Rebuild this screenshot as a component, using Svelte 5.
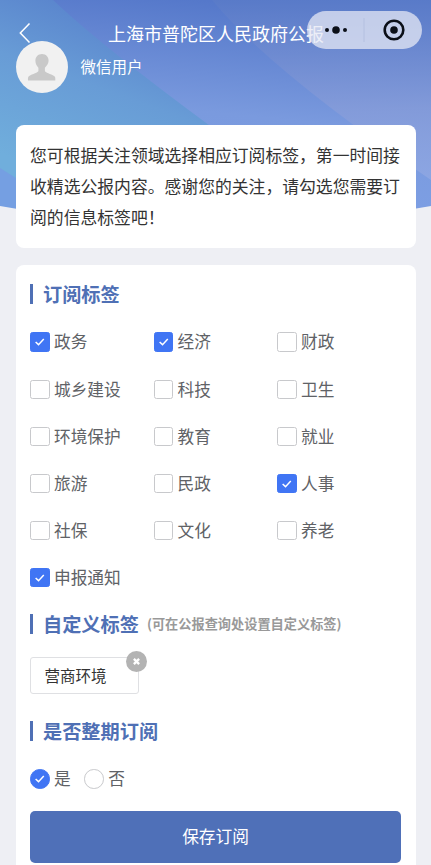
<script>
  const row = (names) => names.split(' ');
  const labels = row('政务 经济 财政 城乡建设 科技 卫生 环境保护 教育 就业 旅游 民政 人事 社保 文化 养老 申报通知');
  let chosen = $state(['政务', '经济', '人事', '申报通知']);
  let whole = $state('是');
  let tags = $state(['营商环境']);

  function toggle(name) {
    chosen = chosen.includes(name) ? chosen.filter((n) => n !== name) : [...chosen, name];
  }
</script>

{#snippet tick()}
  <svg class="tick" viewBox="0 0 20 20"><path d="M5.3 10.2 L8.6 13.3 L14.6 6.8" /></svg>
{/snippet}

<main>
  <svg class="backdrop" viewBox="0 0 431 212" preserveAspectRatio="none">
    <defs>
      <linearGradient id="base" gradientUnits="userSpaceOnUse" x1="110" y1="-10" x2="45" y2="170">
        <stop offset="0" stop-color="#557dca" />
        <stop offset="0.5" stop-color="#689cd6" />
        <stop offset="1" stop-color="#70aedc" />
      </linearGradient>
      <linearGradient id="mid" gradientUnits="userSpaceOnUse" x1="200" y1="0" x2="180" y2="200">
        <stop offset="0" stop-color="#5578ca" />
        <stop offset="0.55" stop-color="#7a9ade" />
        <stop offset="1" stop-color="#7d9fe4" />
      </linearGradient>
      <linearGradient id="light" x1="0" y1="0" x2="0" y2="1">
        <stop offset="0" stop-color="#5a7bc8" />
        <stop offset="0.6" stop-color="#869cd9" />
        <stop offset="1" stop-color="#90a8e3" />
      </linearGradient>
    </defs>
    <rect width="431" height="212" fill="url(#base)" />
    <path d="M53 0 H431 V212 H330 Q125 68 53 0Z" fill="url(#mid)" />
    <path d="M212 0 H431 V180 Q270 70 212 0Z" fill="url(#light)" opacity="0.8" />
    <path d="M0 168 L70 212 H0Z" fill="#759fe2" />
    <path d="M0 206 Q215 244 431 206 V212 H0Z" fill="#eeeff4" />
  </svg>

  <header>
    <svg class="back" viewBox="0 0 12 22"><path d="M10.5 1.5 L1.3 11 L10.5 20.5" /></svg>
    <h1>上海市普陀区人民政府公报</h1>
    <div class="capsule">
      <svg viewBox="0 0 115 38">
        <circle cx="20" cy="19" r="2" />
        <circle cx="29" cy="19" r="3.8" />
        <circle cx="38" cy="19" r="2" />
        <path d="M57 7 V31" stroke="#b4c0e0" stroke-width="1" />
        <circle cx="87" cy="19" r="9.3" fill="none" stroke="#0b0f18" stroke-width="2.6" />
        <circle cx="87" cy="19" r="3.8" />
      </svg>
    </div>
  </header>

  <div class="user">
    <svg viewBox="0 0 52 52">
      <circle cx="26" cy="26" r="26" fill="#f1f1f1" />
      <path d="M26 13c-4 0-6.6 2.9-6.6 6.8 0 3 1.4 5.3 3 6.9v3.2c0 1.3-6.1 3-9.2 5.1-1.4 1-1.3 2-1.2 4.5h27.3c.1-2.5.2-3.5-1.2-4.5-3.1-2.1-9.2-3.8-9.2-5.1v-3.2c1.6-1.6 3.7-3.9 3.7-6.9 0-3.9-2.6-6.8-6.6-6.8z" fill="#c9c9c9" />
    </svg>
    <span>微信用户</span>
  </div>

  <section class="intro">
    您可根据关注领域选择相应订阅标签，第一时间接收精选公报内容。感谢您的关注，请勾选您需要订阅的信息标签吧！
  </section>

  <section class="panel">
    <h2>订阅标签</h2>
    <div class="grid">
      {#each labels as name}
        <button class="option" onclick={() => toggle(name)}>
          <span class="box" class:on={chosen.includes(name)}>
            {#if chosen.includes(name)}{@render tick()}{/if}
          </span>
          <span class="label">{name}</span>
        </button>
      {/each}
    </div>

    <h2 class="custom">自定义标签<small>(可在公报查询处设置自定义标签)</small></h2>
    <div class="tags">
      {#each tags as tag}
        <div class="tag">
          <span class="label">{tag}</span>
          <button class="remove" aria-label="×" onclick={() => (tags = tags.filter((t) => t !== tag))}>
            <svg viewBox="0 0 20 20"><path d="M7.5 7.5 L12.5 12.5 M12.5 7.5 L7.5 12.5" /></svg>
          </button>
        </div>
      {/each}
    </div>

    <h2 class="whole">是否整期订阅</h2>
    <div class="radios">
      {#each ['是', '否'] as answer}
        <button class="option" onclick={() => (whole = answer)}>
          <span class="box round" class:on={whole === answer}>
            {#if whole === answer}{@render tick()}{/if}
          </span>
          <span class="label">{answer}</span>
        </button>
      {/each}
    </div>

    <button class="save">保存订阅</button>
  </section>
</main>

<style>
  :global(body) {
    margin: 0;
    background: #eeeff4;
  }
  main {
    position: relative;
    box-sizing: border-box;
    width: 100%;
    height: 865px;
    overflow: hidden;
    padding: 0 15.5px;
    font-family: 'Noto Sans CJK SC', sans-serif;
    color: #333;
  }
  button {
    margin: 0;
    padding: 0;
    border: 0;
    background: none;
    font: inherit;
    color: inherit;
  }
  svg {
    display: block;
  }
  .backdrop {
    position: absolute;
    top: 0;
    left: 0;
    z-index: -1;
    width: 100%;
    height: 212px;
  }
  header {
    position: relative;
    display: flex;
    align-items: center;
    justify-content: center;
    height: 41px;
  }
  .back {
    position: absolute;
    left: 3.5px;
    top: 22px;
    width: 12px;
    height: 22px;
  }
  .back path {
    fill: none;
    stroke: #fff;
    stroke-width: 1.5;
  }
  h1 {
    margin: 24px 0 0 1px;
    font-size: 18px;
    line-height: 26px;
    font-weight: 400;
    color: #fff;
    white-space: nowrap;
  }
  .capsule {
    position: absolute;
    right: -6.5px;
    top: 11px;
    width: 115px;
    height: 38px;
    border-radius: 19px;
    background: rgba(229, 232, 244, 0.75);
  }
  .capsule svg {
    width: 115px;
    height: 38px;
    fill: #0b0f18;
  }
  .user {
    display: flex;
    align-items: center;
    gap: 13px;
    height: 52px;
    color: #fff;
    font-size: 15.5px;
  }
  .user svg {
    width: 52px;
    height: 52px;
  }
  .user span {
    padding-bottom: 2px;
  }
  .intro {
    box-sizing: border-box;
    height: 123px;
    margin-top: 32px;
    padding: 15px 14px 15px 14.5px;
    border-radius: 8px;
    background: #fff;
    font-size: 16.82px;
    line-height: 30.8px;
  }
  .panel {
    box-sizing: border-box;
    height: 640px;
    margin-top: 17px;
    padding: 18.5px 14.5px 0;
    border-radius: 8px;
    background: #fff;
  }
  h2 {
    display: flex;
    align-items: center;
    height: 21px;
    margin: 0;
    font-size: 19.2px;
    line-height: 21px;
    font-weight: 700;
    color: #4f70b5;
    white-space: nowrap;
  }
  h2::before {
    content: '';
    width: 2.5px;
    height: 20px;
    margin-right: 10.5px;
    background: #4f70b5;
  }
  small {
    margin-left: 8px;
    padding-bottom: 1px;
    font-size: 13.2px;
    color: #999;
  }
  .grid {
    display: grid;
    grid-template-columns: repeat(3, 123.5px);
    grid-auto-rows: 47.05px;
    margin-top: 14.2px;
  }
  .option {
    display: flex;
    align-items: center;
    gap: 4.5px;
    font-size: 16.7px;
    color: #606266;
    white-space: nowrap;
  }
  .label {
    padding-bottom: 1.5px;
  }
  .box {
    box-sizing: border-box;
    width: 19.5px;
    height: 19.5px;
    border: 1px solid #c8c9cc;
    border-radius: 2.5px;
    background: #fff;
  }
  .round {
    border-radius: 50%;
  }
  .on {
    border-color: #4075f4;
    background: #4075f4;
  }
  .tick {
    width: 100%;
    height: 100%;
  }
  .tick path {
    fill: none;
    stroke: #fff;
    stroke-width: 1.7;
  }
  .custom {
    margin-top: 12.8px;
  }
  .tags {
    display: flex;
    height: 37px;
    margin-top: 22px;
  }
  .tag {
    position: relative;
    display: flex;
    align-items: center;
    box-sizing: border-box;
    width: 108.5px;
    height: 37px;
    padding-left: 13.5px;
    border: 1px solid #dfe0e3;
    border-radius: 3px;
    font-size: 15.5px;
  }
  .remove {
    position: absolute;
    right: -9px;
    top: -7px;
    width: 21px;
    height: 21px;
    border-radius: 50%;
    background: #b3b3b3;
  }
  .remove path {
    stroke: #fff;
    stroke-width: 2.2;
  }
  .whole {
    margin-top: 27px;
  }
  .radios {
    display: flex;
    gap: 13.5px;
    height: 24px;
    margin-top: 25px;
  }
  .save {
    width: 100%;
    height: 52.5px;
    margin-top: 20px;
    padding-bottom: 3px;
    border-radius: 5px;
    background: #4f70b8;
    font-size: 16.7px;
    color: #fff;
  }
</style>
